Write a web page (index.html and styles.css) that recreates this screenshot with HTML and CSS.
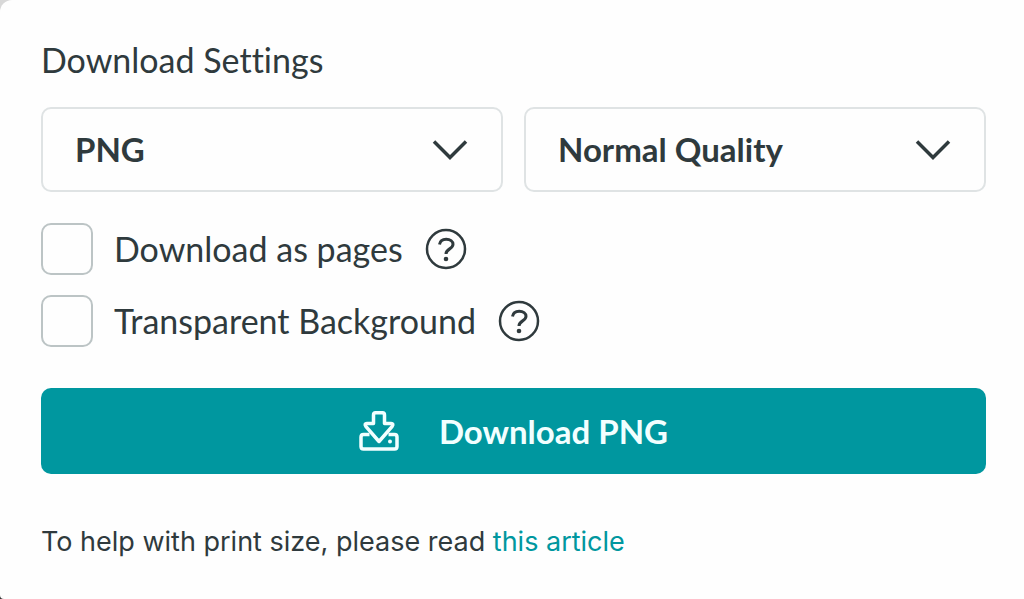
FILE: index.html
```html
<!DOCTYPE html>
<html lang="en">
  <head>
    <meta charset="UTF-8">
    <meta name="viewport" content="width=device-width, initial-scale=1.0">
    <title>Download Settings</title>
    <link rel="stylesheet" href="styles.css">
  </head>
  <body>
    <main class="panel">
      <form class="download-form">
        <h1 class="title">Download Settings</h1>

        <div class="selects">
          <div class="select-box">
            <select class="select" aria-label="File type">
              <option>PNG</option>
              <option>JPG</option>
              <option>PDF</option>
            </select>
            <svg class="chevron" viewBox="0 0 36 22" aria-hidden="true"><path d="M2 2.5 18 18.5 34 2.5" /></svg>
          </div>
          <div class="select-box">
            <select class="select" aria-label="Quality">
              <option>Normal Quality</option>
              <option>High Quality</option>
            </select>
            <svg class="chevron" viewBox="0 0 36 22" aria-hidden="true"><path d="M2 2.5 18 18.5 34 2.5" /></svg>
          </div>
        </div>

        <div class="options">
          <div class="option">
            <input class="checkbox" type="checkbox" id="pages">
            <label for="pages">Download as pages</label>
            <button class="help" type="button" aria-label="About download as pages">
              <svg viewBox="0 0 42 42" aria-hidden="true">
                <circle cx="21" cy="21" r="19" />
                <path d="M14.5 16.5C15 13 17.500 11.200 21.200 11.200C25.200 11.200 28 13.300 28 16.300C28 21.300 21 20.500 21 26" />
                <circle class="dot" cx="21" cy="31" r="2.300" />
              </svg>
            </button>
          </div>
          <div class="option">
            <input class="checkbox" type="checkbox" id="transparent">
            <label for="transparent">Transparent Background</label>
            <button class="help" type="button" aria-label="About transparent background">
              <svg viewBox="0 0 42 42" aria-hidden="true">
                <circle cx="21" cy="21" r="19" />
                <path d="M14.5 16.5C15 13 17.500 11.200 21.200 11.200C25.200 11.200 28 13.300 28 16.300C28 21.300 21 20.500 21 26" />
                <circle class="dot" cx="21" cy="31" r="2.300" />
              </svg>
            </button>
          </div>
        </div>

        <button class="download-btn" type="button">
          <svg class="download-icon" viewBox="0 0 40 40" aria-hidden="true">
            <path d="M14.500 12V4Q14.500 1.800 16.500 1.800H23.500Q25.500 1.800 25.500 4V12.500H32Q35 12.700 33.200 15.300L20 30.500 6.800 15.300Q5 12.700 8 12.500H14.500Z" />
            <path d="M10.500 23.500H4.500Q2 23.500 2 26V35.500Q2 38 4.500 38H35.500Q38 38 38 35.500V26Q38 23.500 35.500 23.500H29.500" />
            <circle class="dot" cx="31" cy="30.500" r="2" />
          </svg>
          Download PNG
        </button>
      </form>

      <p class="note">To help with print size, please read <a href="#">this article</a></p>
    </main>
  </body>
</html>
```
FILE: styles.css
```css
:root {
  --text: #2f3a3d;
  --teal: #00979f;
  --border: #dfe3e4;
  --check-border: #bcc4c5;
}

* {
  box-sizing: border-box;
}

body {
  margin: 0;
  background: linear-gradient(#d8d8d8 60%, #333);
  color: var(--text);
  font-family: Lato, "Liberation Sans", sans-serif;
  font-size: 34px;
  line-height: 40px;
  font-variant-ligatures: none;
}

button,
select {
  color: inherit;
  font: inherit;
}

.panel {
  min-height: 100vh;
  padding: 40px 38px 38px 41px;
  background: #fefefe;
  border-radius: 12px 0 0 4px;
}

.title {
  margin: 0 0 27px;
  font-size: 34px;
  font-weight: 400;
}

.selects {
  display: grid;
  grid-template-columns: 1fr 1fr;
  gap: 21px;
}

/* The chevron shares the grid cell with the select */
.select-box {
  display: grid;
  align-items: center;
}

.select,
.chevron {
  grid-area: 1 / 1;
}

.select {
  width: 100%;
  height: 85px;
  padding: 0 80px 2px 32px;
  appearance: none;
  background: #fefefe;
  border: 2px solid var(--border);
  border-radius: 10px;
  font-size: 33px;
  font-weight: 700;
  cursor: pointer;
}

.chevron {
  justify-self: end;
  width: 36px;
  margin-right: 35px;
  fill: none;
  stroke: var(--text);
  stroke-width: 3.5;
  pointer-events: none;
}

.options {
  display: grid;
  gap: 20px;
  margin: 31px 0 41px;
}

.option {
  display: flex;
  align-items: center;
}

.checkbox {
  width: 52px;
  height: 52px;
  margin: 0 21px 0 0;
  appearance: none;
  background: #fefefe;
  border: 2px solid var(--check-border);
  border-radius: 10px;
  cursor: pointer;
}

.checkbox:checked {
  background: var(--teal);
}

.help {
  width: 42px;
  height: 42px;
  margin-left: 22px;
  padding: 0;
  background: none;
  border: none;
  cursor: pointer;
}

.help svg {
  display: block;
  fill: none;
  stroke: var(--text);
  stroke-width: 2.5;
}

.help path {
  stroke-width: 3;
}

.help .dot {
  fill: var(--text);
  stroke: none;
}

.download-btn {
  display: flex;
  justify-content: center;
  align-items: center;
  gap: 40px;
  width: 100%;
  height: 86px;
  padding: 0;
  background: var(--teal);
  border: none;
  border-radius: 10px;
  color: #f2ffff;
  font-size: 33px;
  font-weight: 700;
  cursor: pointer;
}

.download-icon {
  width: 40px;
  height: 40px;
  fill: none;
  stroke: currentColor;
  stroke-width: 3.5;
  stroke-linejoin: round;
}

.download-icon .dot {
  fill: currentColor;
  stroke: none;
}

.note {
  margin: 50px 0 0;
  font-family: Inter, "Liberation Sans", sans-serif;
  font-size: 27px;
  line-height: 36px;
}

.note a {
  color: var(--teal);
  text-decoration: none;
}
```
